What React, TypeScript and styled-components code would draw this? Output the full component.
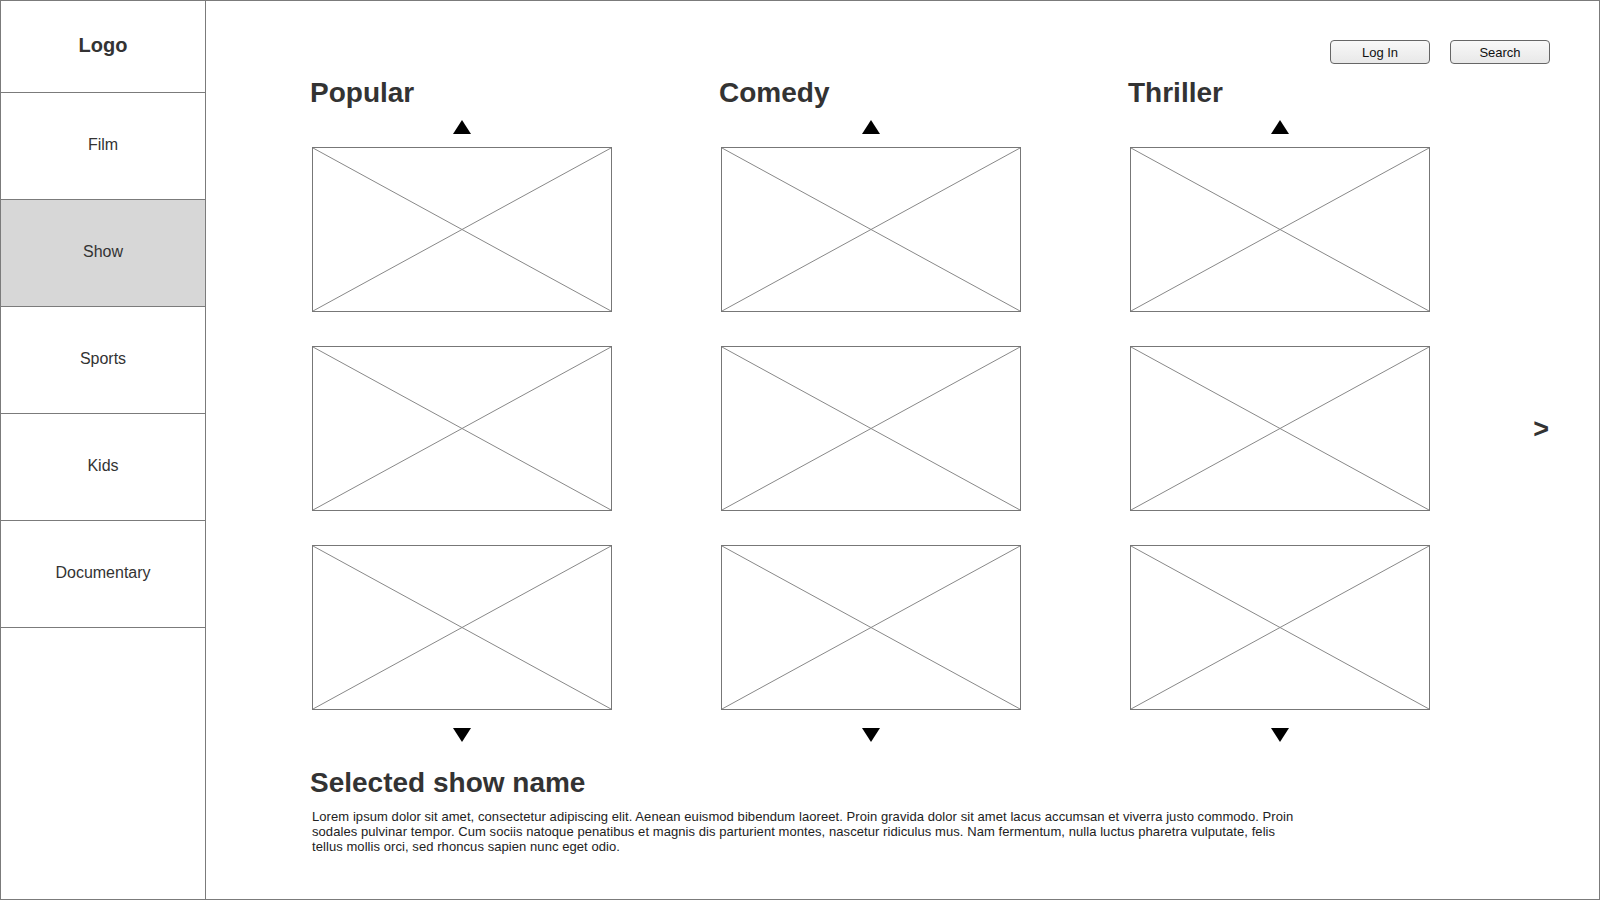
import React from "react"
import styled, { createGlobalStyle } from "styled-components"

const GlobalStyle = createGlobalStyle`
  body {
    margin: 0;
    font-family: "Liberation Sans", Arial, sans-serif;
    background: #fff;
  }
`

const Frame = styled.div`
  width: 1600px;
  height: 900px;
  box-sizing: border-box;
  border: 1px solid #7b7b7b;
  display: flex;
  overflow: hidden;
`

const Sidebar = styled.nav`
  width: 205px;
  flex-shrink: 0;
  box-sizing: border-box;
  border-right: 1px solid #7b7b7b;
  display: flex;
  flex-direction: column;
`

const LogoCell = styled.div`
  height: 89px;
  padding-bottom: 2px;
  border-bottom: 1px solid #7b7b7b;
  display: flex;
  align-items: center;
  justify-content: center;
  font-size: 20px;
  font-weight: bold;
  color: #333;
`

const NavItem = styled.div<{ $active?: boolean }>`
  height: 103px;
  padding-bottom: 3px;
  border-bottom: 1px solid #7b7b7b;
  display: flex;
  align-items: center;
  justify-content: center;
  font-size: 16px;
  color: #333;
  background: ${({ $active }) => ($active ? "#d7d7d7" : "transparent")};
`

const Main = styled.main`
  flex: 1;
  padding: 39px 49px 0 106px;
  display: flex;
  flex-direction: column;
`

const TopBar = styled.div`
  display: flex;
  justify-content: flex-end;
  gap: 20px;
`

const Button = styled.button`
  width: 100px;
  height: 24px;
  box-sizing: border-box;
  border: 1px solid #666;
  border-radius: 4px;
  background: linear-gradient(#f8f8f8, #e8e8e8);
  font-family: "Liberation Sans", Arial, sans-serif;
  font-size: 13px;
  color: #111;
  padding: 0;
`

const BrowseRow = styled.div`
  display: flex;
  margin-top: 13px;
`

const Columns = styled.div`
  display: grid;
  grid-template-columns: repeat(3, 300px);
  column-gap: 109px;
`

const Column = styled.section`
  display: flex;
  flex-direction: column;
`

const Heading = styled.h2`
  margin: 0 0 0 -2px;
  font-size: 28px;
  line-height: 32px;
  font-weight: bold;
  color: #333;
`

const Arrow = styled.div<{ $down?: boolean }>`
  width: 0;
  height: 0;
  align-self: center;
  border-left: 9px solid transparent;
  border-right: 9px solid transparent;
  ${({ $down }) =>
    $down
      ? "border-top: 14px solid #000; margin-top: 18px;"
      : "border-bottom: 14px solid #000; margin-top: 11px;"}
`

const Thumbs = styled.div`
  display: flex;
  flex-direction: column;
  gap: 34px;
  margin-top: 13px;
`

const Thumb = styled.div`
  height: 165px;
  box-sizing: border-box;
  border: 1px solid #777;
  svg {
    display: block;
    width: 100%;
    height: 100%;
  }
`

const Pager = styled.div`
  flex: 1;
  display: flex;
  align-items: center;
  justify-content: flex-end;
  padding: 71px 1px 32px 0;
  font-size: 27px;
  font-weight: bold;
  color: #333;
`

const Details = styled.div`
  margin-top: 25px;
`

const Blurb = styled.p`
  width: 988px;
  margin: 10px 0 0;
  font-size: 13px;
  line-height: 15px;
  letter-spacing: 0.07px;
  color: #222;
`

const Placeholder = () => (
  <Thumb>
    <svg viewBox="0 0 100 100" preserveAspectRatio="none">
      <line x1="0" y1="0" x2="100" y2="100" stroke="#888" strokeWidth="1" vectorEffect="non-scaling-stroke" />
      <line x1="100" y1="0" x2="0" y2="100" stroke="#888" strokeWidth="1" vectorEffect="non-scaling-stroke" />
    </svg>
  </Thumb>
)

const navItems = ["Film", "Show", "Sports", "Kids", "Documentary"]
const genres = ["Popular", "Comedy", "Thriller"]

export default function App() {
  return (
    <>
      <GlobalStyle />
      <Frame>
        <Sidebar>
          <LogoCell>Logo</LogoCell>
          {navItems.map((item) => (
            <NavItem key={item} $active={item === "Show"}>
              {item}
            </NavItem>
          ))}
        </Sidebar>
        <Main>
          <TopBar>
            <Button>Log In</Button>
            <Button>Search</Button>
          </TopBar>
          <BrowseRow>
            <Columns>
              {genres.map((g) => (
                <Column key={g}>
                  <Heading>{g}</Heading>
                  <Arrow />
                  <Thumbs>
                    <Placeholder />
                    <Placeholder />
                    <Placeholder />
                  </Thumbs>
                  <Arrow $down />
                </Column>
              ))}
            </Columns>
            <Pager>&gt;</Pager>
          </BrowseRow>
          <Details>
            <Heading>Selected show name</Heading>
            <Blurb>
              Lorem ipsum dolor sit amet, consectetur adipiscing elit. Aenean euismod bibendum laoreet. Proin gravida dolor
              sit amet lacus accumsan et viverra justo commodo. Proin sodales pulvinar tempor. Cum sociis natoque penatibus
              et magnis dis parturient montes, nascetur ridiculus mus. Nam fermentum, nulla luctus pharetra vulputate, felis
              tellus mollis orci, sed rhoncus sapien nunc eget odio.
            </Blurb>
          </Details>
        </Main>
      </Frame>
    </>
  )
}
